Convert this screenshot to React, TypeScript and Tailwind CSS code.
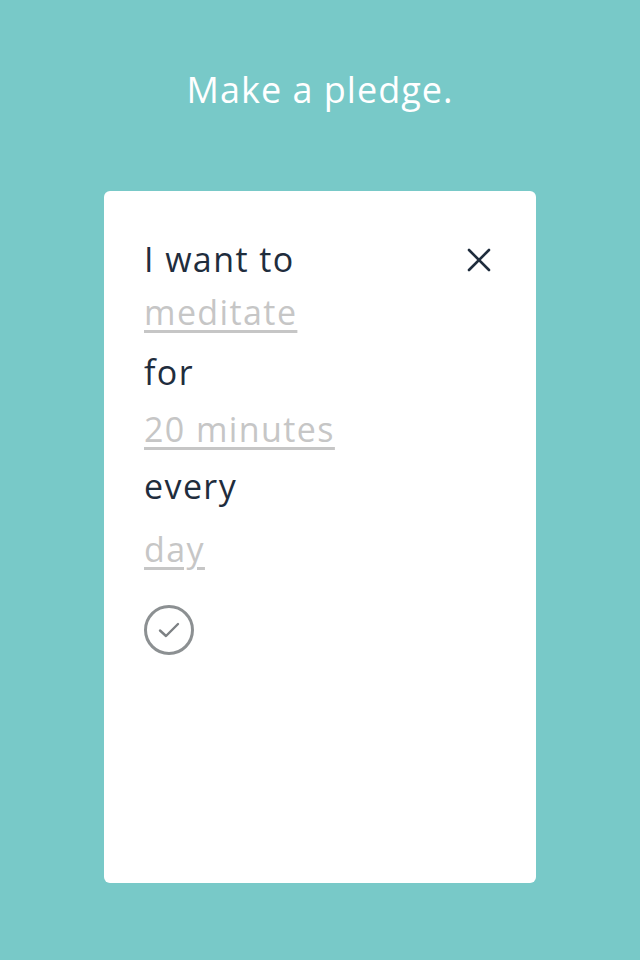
import React from "react";

const lines: { text: string; choice?: boolean; mt: string }[] = [
  { text: "I want to", mt: "mt-0" },
  { text: "meditate", choice: true, mt: "-mt-[4px]" },
  { text: "for", mt: "mt-[3px]" },
  { text: "20 minutes", choice: true, mt: "mt-0" },
  { text: "every", mt: "mt-0" },
  { text: "day", choice: true, mt: "mt-[6px]" },
];

export default function App() {
  return (
    <div
      className="w-[640px] h-[960px] bg-[#78c9c8] flex flex-col items-center"
      style={{ fontFamily: '"Open Sans", "Noto Sans", sans-serif' }}
    >
      <h1 className="mt-[66px] text-[36px] leading-[48px] text-white tracking-[1px]">
        Make a pledge.
      </h1>
      <div className="mt-[77px] w-[432px] h-[692px] bg-white rounded-[6px] relative px-10 pt-[40px]">
        <button className="absolute right-[45px] top-[57px] text-[#1f2d3d]">
          <svg width="24" height="24" viewBox="0 0 24 24" fill="none" stroke="currentColor" strokeWidth="2.6" strokeLinecap="round">
            <path d="M2 2 L22 22 M22 2 L2 22" />
          </svg>
        </button>
        <div className="flex flex-col">
          {lines.map((l) =>
            l.choice ? (
              <span
                key={l.text}
                className={`${l.mt} self-start text-[34px] leading-[57px] tracking-[1.4px] text-[#c6c6c6] underline decoration-[2.5px] underline-offset-[5px]`}
              >
                {l.text}
              </span>
            ) : (
              <span key={l.text} className={`${l.mt} self-start text-[34px] leading-[57px] tracking-[1.4px] text-[#1f2d3d]`}>
                {l.text}
              </span>
            )
          )}
        </div>
        <div className="mt-[27px] w-[50px] h-[50px] rounded-full border-[3px] border-[#8c9092] flex items-center justify-center text-[#7d8184]">
          <svg width="24" height="24" viewBox="0 0 24 24" fill="none" stroke="currentColor" strokeWidth="2.4" strokeLinecap="round" strokeLinejoin="round">
            <path d="M3 12.5 L9 18 L21 6" />
          </svg>
        </div>
      </div>
    </div>
  );
}
